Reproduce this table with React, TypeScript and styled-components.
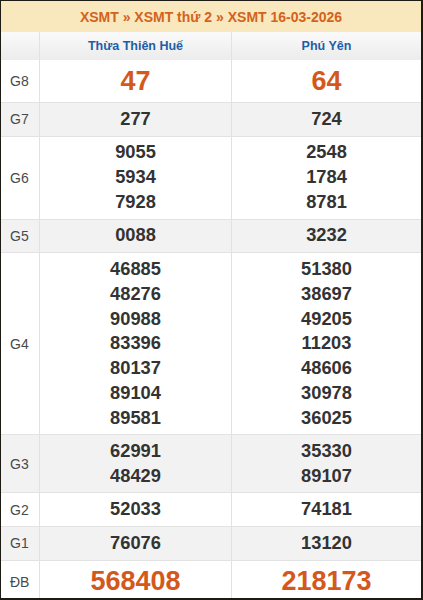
import React from "react";
import styled, { createGlobalStyle } from "styled-components";

const Global = createGlobalStyle`
  html, body { margin: 0; padding: 0; background: #fff; }
  body { font-family: "Liberation Sans", Arial, sans-serif; }
`;

const Frame = styled.div`
  box-sizing: border-box;
  width: 423px;
  height: 600px;
  border-top: 1px solid #1e1a14;
  border-left: 1px solid #1e1a14;
  border-right: 2px solid #1e1a14;
  border-bottom: 2px solid #1e1a14;
  overflow: hidden;
  display: flex;
  flex-direction: column;
  & > * { flex-shrink: 0; }
`;

const Title = styled.div`
  height: 31px;
  background: #f9e8bd;
  color: #d4621c;
  font-weight: bold;
  font-size: 14px;
  display: flex;
  align-items: center;
  justify-content: center;
`;

const Row = styled.div<{ $alt?: boolean }>`
  display: grid;
  grid-template-columns: 39px 192px 1fr;
  background: ${(p) => (p.$alt ? "#f2f2f2" : "#fff")};
  border-bottom: 1px solid #e2e2e2;
`;

const HeadRow = styled(Row)`
  height: 28px;
  background: linear-gradient(#fafafa, #ececec);
  border-bottom: none;
`;

const Cell = styled.div`
  border-right: 1px solid #e2e2e2;
  display: flex;
  flex-direction: column;
  align-items: center;
  justify-content: center;
  padding: 3.9px 0;
  &:last-child { border-right: none; }
`;

const HeadCell = styled(Cell)`
  color: #1d5ea8;
  font-weight: bold;
  font-size: 12.5px;
  padding: 0;
`;

const Label = styled(Cell)`
  color: #4a4a4a;
  font-size: 14px;
  align-items: flex-start;
  padding-left: 9px;
`;

const Num = styled.div<{ $big?: boolean }>`
  font-weight: bold;
  color: ${(p) => (p.$big ? "#d4581c" : "#333")};
  font-size: ${(p) => (p.$big ? "27px" : "18.3px")};
  line-height: ${(p) => (p.$big ? "34.25px" : "24.75px")};
`;

type Prize = { label: string; a: string[]; b: string[]; big?: boolean };

const prizes: Prize[] = [
  { label: "G8", a: ["47"], b: ["64"], big: true },
  { label: "G7", a: ["277"], b: ["724"] },
  { label: "G6", a: ["9055", "5934", "7928"], b: ["2548", "1784", "8781"] },
  { label: "G5", a: ["0088"], b: ["3232"] },
  {
    label: "G4",
    a: ["46885", "48276", "90988", "83396", "80137", "89104", "89581"],
    b: ["51380", "38697", "49205", "11203", "48606", "30978", "36025"],
  },
  { label: "G3", a: ["62991", "48429"], b: ["35330", "89107"] },
  { label: "G2", a: ["52033"], b: ["74181"] },
  { label: "G1", a: ["76076"], b: ["13120"] },
  { label: "ĐB", a: ["568408"], b: ["218173"], big: true },
];

export default function App() {
  return (
    <>
      <Global />
      <Frame>
        <Title>XSMT » XSMT thứ 2 » XSMT 16-03-2026</Title>
        <HeadRow>
          <HeadCell />
          <HeadCell>Thừa Thiên Huế</HeadCell>
          <HeadCell>Phú Yên</HeadCell>
        </HeadRow>
        {prizes.map((p, i) => (
          <Row key={p.label} $alt={i % 2 === 1}>
            <Label>{p.label}</Label>
            <Cell>
              {p.a.map((n) => (
                <Num key={n} $big={p.big}>{n}</Num>
              ))}
            </Cell>
            <Cell>
              {p.b.map((n) => (
                <Num key={n} $big={p.big}>{n}</Num>
              ))}
            </Cell>
          </Row>
        ))}
      </Frame>
    </>
  );
}
